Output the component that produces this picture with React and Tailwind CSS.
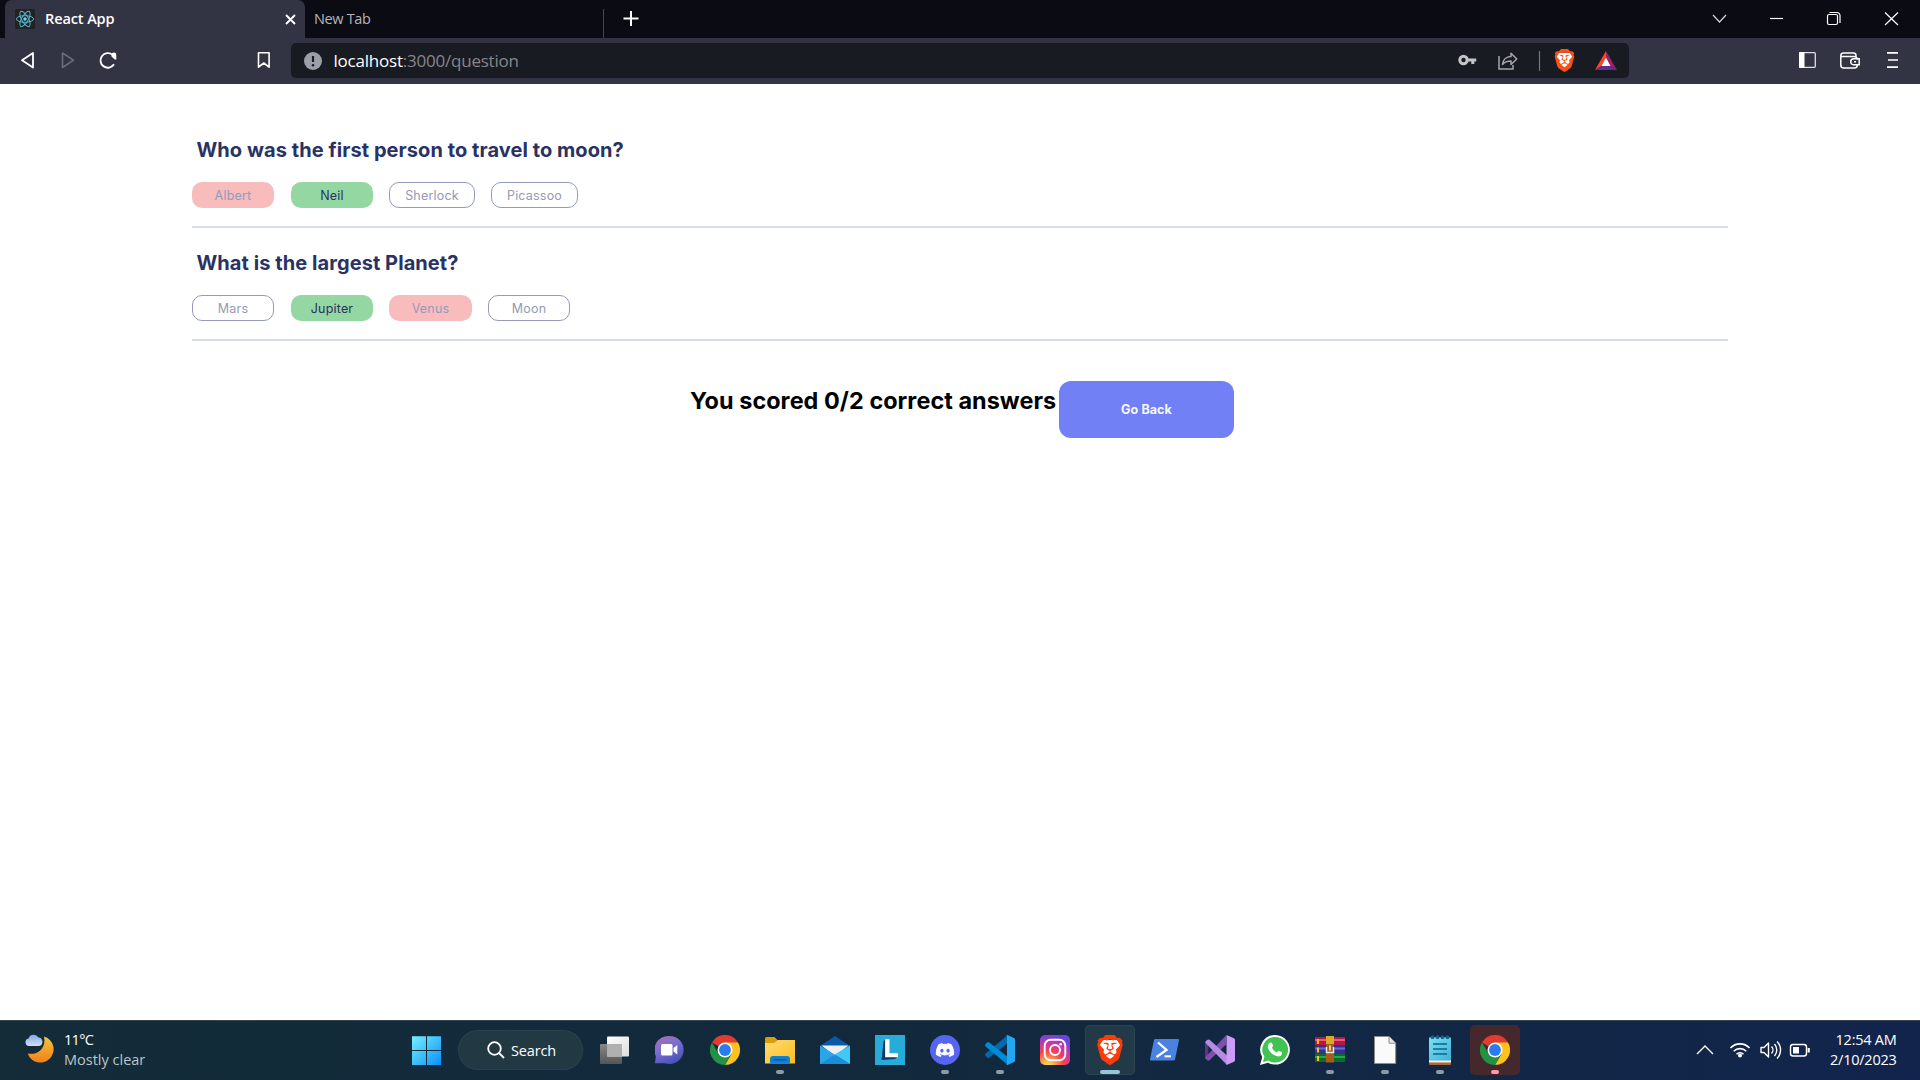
import React from "react";
import { SiBrave } from "react-icons/si";
import { FaDiscord } from "react-icons/fa";

const UI = "font-['Open_Sans','Noto_Sans',sans-serif]";

function ReactLogo() {
  return (
    <svg className="h-5 w-5" viewBox="0 0 20 20">
      <rect width="20" height="20" rx="1.5" fill="#222" />
      <g fill="none" stroke="#53b5cf" strokeWidth="1">
        <ellipse cx="10" cy="10" rx="8.6" ry="3.3" />
        <ellipse cx="10" cy="10" rx="8.6" ry="3.3" transform="rotate(60 10 10)" />
        <ellipse cx="10" cy="10" rx="8.6" ry="3.3" transform="rotate(120 10 10)" />
      </g>
      <circle cx="10" cy="10" r="1.7" fill="#61dafb" />
    </svg>
  );
}

function BraveLogo({ className, color }) {
  return (
    <span className={`relative block ${className}`}>
      <svg className="absolute inset-0 h-full w-full" viewBox="0 0 24 24">
        <path d="M6 4h12l2.500 4-2 9-6.500 5-6.500-5-2-9z" fill="#fff" />
      </svg>
      <SiBrave className="absolute inset-0 h-full w-full" color={color} />
    </span>
  );
}

function WindowControls() {
  return (
    <svg className="h-[38px] w-[220px]" viewBox="1700 0 220 38" fill="none" stroke="#fff" strokeWidth="1.200">
      <path d="M1713 15l6.500 7 6.500-7" stroke="#d4d4d6" />
      <path d="M1770 18.500h13" />
      <rect x="1827.500" y="14.500" width="10" height="10" rx="1.500" />
      <path d="M1829.500 12.500h7.500a3 3 0 0 1 3 3v7.500" />
      <path d="M1885 12.500l13 12.500M1898 12.500l-13 12.500" />
    </svg>
  );
}

function Header() {
  return (
    <header>
      <div className={`flex h-[38px] justify-between bg-[#0b0b14] pl-[5px] ${UI}`}>
        <div className="flex">
          <div className="flex h-[38px] w-[300px] items-center rounded-t-[7px] bg-[#323443] pl-[10px] pr-[9px]">
            <ReactLogo />
            <span className="ml-[10px] flex-1 whitespace-nowrap text-[14.5px] font-semibold tracking-[-0.1px] text-white">React App</span>
            <svg className="h-[11px] w-[11px]" viewBox="0 0 11 11" stroke="#fff" strokeWidth="1.900">
              <path d="M1 1l9 9M10 1l-9 9" />
            </svg>
          </div>
          <div className="flex w-[299px] items-center justify-between pl-[9px]">
            <span className="text-[14.5px] tracking-[-0.35px] text-[#b4b5ba]">New Tab</span>
            <span className="mt-[9px] h-[29px] w-px bg-[#45454b]" />
          </div>
          <svg className="ml-[19px] mt-[11px] h-[15px] w-[16px]" viewBox="0 0 16 15" stroke="#fff" strokeWidth="2">
            <path d="M8 0v15M.5 7.500h15" />
          </svg>
        </div>
        <WindowControls />
      </div>
      <div className={`flex h-[46px] items-start bg-[#323443] ${UI}`}>
        <svg className="h-[46px] w-[291px]" viewBox="0 38 291 46" fill="none" strokeLinejoin="round">
          <path d="M33 53v14.500L22 60.200z" stroke="#fff" strokeWidth="1.800" />
          <path d="M62.500 53v14.500l11-7.300z" stroke="#6b6d78" strokeWidth="1.600" />
          <path d="M112.500 54.800a7.300 7.300 0 1 0 1.500 9.500" stroke="#fff" strokeWidth="1.900" />
          <path d="M111.500 55a2.300 2.300 0 0 1 4.800 0v4.500h-1.500l-3.300-3z" fill="#fff" />
          <path d="M258.500 52.800h10.600v14.400l-5.300-4.200-5.300 4.200z" stroke="#fff" strokeWidth="1.600" />
        </svg>
        <div className="mt-[5px] flex h-[35px] w-[1338px] items-center rounded-[5px] bg-[#191b22] pl-[13px]">
          <svg className="h-[18px] w-[18px]" viewBox="0 0 18 18">
            <circle cx="9" cy="9" r="9" fill="#9d9fa8" />
            <path d="M9 4v6" stroke="#191b22" strokeWidth="2.200" />
            <circle cx="9" cy="13.200" r="1.300" fill="#191b22" />
          </svg>
          <span className="ml-[11.500px] flex-1 whitespace-nowrap text-[17px] tracking-[-0.22px] text-[#85868c]">
            <span className="text-white">localhost</span>:3000/question
          </span>
          <svg className="h-[35px] w-[145px]" viewBox="1401 43 145 35" fill="none">
            <circle cx="1463.500" cy="60" r="3.700" stroke="#c4c5c9" strokeWidth="3" />
            <path d="M1467.500 60h8.700M1472.800 60v4" stroke="#c4c5c9" strokeWidth="3" />
            <path d="M1499 56v13h14v-4" stroke="#a5a6a9" strokeWidth="1.500" />
            <path d="M1502.500 64.500c.5-4.500 3.500-8 8.500-8v-3.300l5.800 5.800-5.800 5.500v-3.500c-3.500 0-6.500 1-8.500 3.500z" stroke="#a5a6a9" strokeWidth="1.500" strokeLinejoin="round" />
            <path d="M1539.500 51v20" stroke="#74757a" strokeWidth="1.200" />
          </svg>
          <BraveLogo className="ml-[7px] h-[23px] w-[23px]" color="#fb4f14" />
          <svg className="ml-[19px] mr-[12px] h-[19px] w-[22px]" viewBox="0 0 22 19">
            <path d="M11 0L0 19l7-4.500 4-8z" fill="#ff4724" />
            <path d="M11 0l11 19-7-4.500-4-8z" fill="#9e1f63" />
            <path d="M0 19h22l-7-4.500H7z" fill="#662d91" />
            <path d="M11 6.500L15.500 15h-9z" fill="#fff" />
          </svg>
        </div>
        <svg className="h-[46px] w-[291px]" viewBox="1629 38 291 46" fill="none" stroke="#fff">
          <rect x="1799.700" y="52.700" width="15.600" height="14.600" rx="1" stroke="#e0e0e4" strokeWidth="1.300" />
          <path d="M1799.500 52.500h4.500v15h-4.500z" fill="#fff" />
          <path d="M1856 57v-1.500a2.500 2.500 0 0 0-2.500-2.500h-10a2.700 2.700 0 0 0-2.700 2.700v9.300a3 3 0 0 0 3 3h10.500a3 3 0 0 0 3-3M1841 56.500h13a3.300 3.300 0 0 1 3.300 3" strokeWidth="1.500" />
          <path d="M1859.200 58.800h-5.500a3 3 0 0 0 0 6h5.500zM1854 61.800h2" strokeWidth="1.500" />
          <path d="M1887 52.800h11M1888 60h10M1887 67.200h11" strokeWidth="1.700" />
        </svg>
      </div>
    </header>
  );
}

const PILL = "flex h-[26px] items-center justify-center rounded-[10px] text-[12.5px] tracking-[0.2px] leading-[18px] pt-px";
const STYLES = {
  wrong: "bg-[#f8bcbc] text-[#939bbd]",
  right: "bg-[#94d7a2] text-[#293264]",
  plain: "border border-[#949bbd] text-[#949ab2]",
};

function Question({ title, options }) {
  return (
    <section className="h-[113px] border-b-2 border-[#d9dcf0] pt-[22px]">
      <h2 className="pl-[4.5px] text-[20px] leading-[26px] font-[650] tracking-[0.07px] text-[#293264]">{title}</h2>
      <div className="mt-[19px] flex">
        {options.map(([label, kind, size]) => (
          <button key={label} className={`${PILL} ${STYLES[kind]} ${size}`}>
            {label}
          </button>
        ))}
      </div>
    </section>
  );
}

function Windows() {
  return (
    <svg className="h-[30px] w-[30px]" viewBox="0 0 30 30">
      <defs>
        <linearGradient id="win" x1="0" y1="0" x2="1" y2="1">
          <stop offset="0" stopColor="#74f0ff" />
          <stop offset="1" stopColor="#0a8ffb" />
        </linearGradient>
      </defs>
      <path d="M0 1.300h14v13.700H0zM15 1.300h14v13.700H15zM0 16h14v14H0zM15 16h14v14H15z" fill="url(#win)" />
    </svg>
  );
}

function Chrome() {
  return (
    <svg className="h-[30px] w-[30px]" viewBox="0 0 48 48">
      <path d="M24 24L3.200 12A24 24 0 0 1 44.800 12z" fill="#e33b2e" />
      <path d="M24 12h20.800A24 24 0 0 1 24 48l10.400-18z" fill="#fcc31e" />
      <path d="M13.600 30L3.200 12A24 24 0 0 0 24 48l10.400-18z" fill="#229342" />
      <circle cx="24" cy="24" r="12" fill="#fff" />
      <circle cx="24" cy="24" r="9.500" fill="#2a7af0" />
    </svg>
  );
}

const icon = "h-[30px] w-[30px]";

const apps = [
  {
    id: "task-view",
    art: (
      <svg className={icon} viewBox="0 0 30 30">
        <defs>
          <linearGradient id="tvA" x1="0" y1="0" x2="0" y2="1"><stop offset="0" stopColor="#888" /><stop offset="1" stopColor="#555" /></linearGradient>
          <linearGradient id="tvB" x1="0" y1="0" x2="1" y2="1"><stop offset="0" stopColor="#fff" /><stop offset="1" stopColor="#ddd" /></linearGradient>
        </defs>
        <rect x="0" y="9" width="22" height="20" rx="1" fill="url(#tvA)" />
        <rect x="7" y="1.500" width="22" height="20" rx="1" fill="url(#tvB)" />
        <path d="M7 9h15v12.500H7z" fill="#b0b0b0" />
      </svg>
    ),
  },
  {
    id: "chat",
    art: (
      <svg className={icon} viewBox="0 0 30 30">
        <defs><linearGradient id="chat" x1="0" y1="0" x2=".5" y2="1"><stop offset="0" stopColor="#b070ad" /><stop offset=".5" stopColor="#7a6fd0" /><stop offset="1" stopColor="#4b53bc" /></linearGradient></defs>
        <path d="M14 1a14 14 0 1 1-4 27.200H0l.8-7A14 14 0 0 1 14 1z" fill="url(#chat)" />
        <rect x="6" y="9" width="11.500" height="11.500" rx="1.500" fill="#fff" />
        <path d="M18.500 13l3.800-3v9.500l-3.800-3z" fill="#fff" />
      </svg>
    ),
  },
  { id: "chrome", art: <Chrome /> },
  {
    id: "files",
    dot: true,
    art: (
      <svg className={icon} viewBox="0 0 30 30">
        <defs><linearGradient id="fold" x1="0" y1="0" x2="1" y2="1"><stop offset="0" stopColor="#ffdc70" /><stop offset="1" stopColor="#fcbd22" /></linearGradient></defs>
        <path d="M0 3.500A1.500 1.500 0 0 1 1.500 2h8l3.500 3.500V12H0z" fill="#dc9c07" />
        <path d="M0 8h9l4-3h17v23.500H0z" fill="url(#fold)" />
        <path d="M5 28.500V24a3 3 0 0 1 3-3h14a3 3 0 0 1 3 3v4.500z" fill="#1180d0" />
        <path d="M8.500 24.800h13" stroke="#0b4f91" strokeWidth="1.200" />
      </svg>
    ),
  },
  {
    id: "mail",
    art: (
      <svg className={icon} viewBox="0 0 30 30">
        <path d="M0 11L15 1l15 10v5H0z" fill="#0b5aa8" />
        <path d="M1.500 10.500h27L15 21z" fill="#f0f0f2" />
        <path d="M0 10.500L30 29H0z" fill="#29a5e8" />
        <path d="M30 10.500V29L14.500 19.500z" fill="#41c9f5" />
        <path d="M0 29l15-9.200L30 29z" fill="#1b8ddb" />
      </svg>
    ),
  },
  {
    id: "l-app",
    art: (
      <span className="flex h-[30px] w-[30px] items-center justify-center bg-[#27abd8]">
        <svg className={icon} viewBox="0 0 30 30">
          <path d="M10 4.500v17L6.500 25l2-18.500zM10 21.500h13L20 24 6.500 25z" fill="#0c3a6b" />
          <path d="M10.200 4.200h4.300v14h8.400v4H10.200z" fill="#fff" />
        </svg>
      </span>
    ),
  },
  {
    id: "discord",
    dot: true,
    art: (
      <span className="flex h-[30px] w-[30px] items-center justify-center rounded-full bg-[#5865f2]">
        <FaDiscord className="h-[20px] w-[20px]" color="#fff" />
      </span>
    ),
  },
  {
    id: "code",
    dot: true,
    art: (
      <svg className={icon} viewBox="0 0 30 30">
        <path d="M.6 18.600L22.500.2V8.300L4 22.800q-.8.500-1.500 0L.5 21q-.9-1.200.1-2.400z" fill="#0069b0" />
        <path d="M.6 11.400q-1-1.200-.1-2.400l2-1.800q.7-.5 1.500 0L22.500 21.700v8.100z" fill="#008ad5" />
        <path d="M22.500 0l6.500 3q1 .5 1 1.600v20.800q0 1.100-1 1.600l-6.500 3q-1 .2-1.600-.5 1.100.6 1.100-1V1.500q0-1.600-1.100-1 .6-.7 1.600-.5z" fill="#24a7f2" />
      </svg>
    ),
  },
  {
    id: "instagram",
    art: (
      <svg className={icon} viewBox="0 0 30 30">
        <defs>
          <radialGradient id="ig" cx=".27" cy="1.050" r="1.050">
            <stop offset="0" stopColor="#ffdd55" /><stop offset=".15" stopColor="#fdc04b" /><stop offset=".5" stopColor="#f5414f" /><stop offset=".75" stopColor="#c837ab" /><stop offset="1" stopColor="#6a45d8" />
          </radialGradient>
        </defs>
        <rect width="30" height="30" rx="5" fill="url(#ig)" />
        <rect x="4.700" y="4.700" width="20.600" height="20.600" rx="6" fill="none" stroke="#fff" strokeWidth="1.900" />
        <circle cx="15" cy="15" r="5" fill="none" stroke="#fff" strokeWidth="1.900" />
        <circle cx="20.700" cy="9.200" r="1.300" fill="#fff" />
      </svg>
    ),
  },
  { id: "brave", active: true, art: <BraveLogo className="h-[30px] w-[30px]" color="#fb3c08" /> },
  {
    id: "powershell",
    art: (
      <svg className={icon} viewBox="0 0 30 30">
        <path d="M5.500 4H28q1.300 0 1 1.300L25 24.500q-.3 1-1.500 1H1Q-.3 25.500 0 24.300L4 5q.3-1 1.500-1z" fill="#4a82e0" />
        <path d="M8 7.500l8.500 7.500-10 7" fill="none" stroke="#fff" strokeWidth="2.300" />
        <path d="M14.500 21.300H21" stroke="#fff" strokeWidth="2" />
      </svg>
    ),
  },
  {
    id: "studio",
    art: (
      <svg className={icon} viewBox="0 0 30 30">
        <path d="M0 7.500q0-1 .8-1.400L3.300 4.700v20.600L.8 24Q0 23.500 0 22.500z" fill="#5d3486" />
        <path d="M1 21.500L21 .5V9.500L4.500 25.300q-.9.600-1.800.1L.8 24q-1-1 .2-2.500z" fill="#7f4faf" />
        <path d="M1 8.500q-1-1.500-.2-2.500l1.900-1.200q1-.6 1.900 0L22 20.500V30z" fill="#b58be0" />
        <path d="M21.500 0L29 3.300q1 .5 1 1.600v20.200q0 1.100-1 1.600L21.500 30z" fill="#cc9af7" />
      </svg>
    ),
  },
  {
    id: "whatsapp",
    art: (
      <svg className={icon} viewBox="0 0 30 30">
        <path d="M15.200 0A14.800 14.800 0 1 1 8 27.800L0 30l2.200-7.800A14.800 14.800 0 0 1 15.200 0z" fill="#fff" />
        <path d="M15.200 2A12.800 12.800 0 1 1 8.400 25.600L2.900 27.200l1.500-5.400A12.800 12.800 0 0 1 15.200 2z" fill="#40c351" />
        <path d="M10.300 7.500c.8-.3 1.500 0 1.800.8l1 2.400c.2.600-.9 1.600-1.100 2.100.9 2.200 2.600 3.700 5 4.700.6-.3 1.400-1.900 2-1.700l2.800 1.400c.8.500-.1 2.800-1 3.500-1.800 1.200-4.100.7-6.700-.6-2.700-1.400-5.300-4.300-6.100-7-.7-2.400.5-4.600 2.300-5.600z" fill="#fff" />
      </svg>
    ),
  },
  {
    id: "archive",
    dot: true,
    art: (
      <svg className={icon} viewBox="0 0 30 30">
        <rect y="2" width="30" height="8.500" fill="#b31942" /><rect y="4" width="30" height="2" fill="#e9577b" />
        <rect y="10.500" width="30" height="8.500" fill="#35328f" /><rect y="12.500" width="30" height="2" fill="#6b69dd" />
        <rect y="19" width="30" height="8" fill="#0b6a30" /><rect y="21" width="30" height="2" fill="#22a64f" />
        <path d="M2 4h2v5H2zM2 12.500h2v5H2zM2 21h2v5H2z" fill="#ffc400" />
        <rect x="11" y="1" width="8" height="26.500" fill="#a85a17" /><rect x="11" y="1" width="8" height="8" fill="#d9a928" />
        <path d="M11.500 12v5.500h7V12" fill="none" stroke="#e8e8e8" strokeWidth="1.500" />
        <path d="M15 10.500v5" stroke="#eee" strokeWidth="1.500" />
      </svg>
    ),
  },
  {
    id: "document",
    dot: true,
    art: (
      <svg className={icon} viewBox="0 0 30 30">
        <path d="M4.500 1.500H19l6.700 6.700v20.300H4.500z" fill="#fafafa" stroke="#8b8b8b" />
        <path d="M19 1.500v6.700h6.700" fill="#e8e8e8" stroke="#8b8b8b" />
      </svg>
    ),
  },
  {
    id: "notes",
    dot: true,
    art: (
      <svg className={icon} viewBox="0 0 30 30">
        <defs><linearGradient id="nt" x1="0" y1="0" x2="1" y2="1"><stop offset="0" stopColor="#7be0f5" /><stop offset="1" stopColor="#3fb0d6" /></linearGradient></defs>
        <rect x="4" y="26" width="22" height="4" rx="1" fill="#b5642a" />
        <rect x="4" y="25" width="22" height="2.500" fill="#eee" />
        <rect x="4" y="2" width="22" height="23.500" rx="1.500" fill="url(#nt)" />
        <path d="M8 9h14M8 14h14M8 19h14" stroke="#0b6686" strokeWidth="1.700" />
        <g fill="#13627e"><circle cx="7.500" cy="2.200" r="1.900" /><circle cx="12.500" cy="2.200" r="1.900" /><circle cx="17.500" cy="2.200" r="1.900" /><circle cx="22.500" cy="2.200" r="1.900" /></g>
      </svg>
    ),
  },
  { id: "chrome-alert", alert: true, art: <Chrome /> },
];

function AppTile({ app }) {
  const tile = app.alert
    ? "bg-[#44282b]"
    : app.active
      ? "bg-[#223a48] inset-ring inset-ring-[#2c4452]"
      : "";
  return (
    <div className="flex w-[55px] justify-center">
      <div className={`relative flex h-[50px] w-[50px] items-center justify-center rounded-[5px] ${tile}`}>
        {app.art}
        {app.dot && <span className="absolute bottom-[1px] h-[4px] w-[8px] rounded-full bg-[#8f9aa3]" />}
        {app.alert && <span className="absolute bottom-[1px] h-[4px] w-[8px] rounded-full bg-[#ff99a4]" />}
        {app.active && <span className="absolute bottom-[1px] h-[4px] w-[20px] rounded-full bg-[#96c6d6]" />}
      </div>
    </div>
  );
}

function Taskbar() {
  return (
    <footer className={`flex h-[60px] items-center inset-shadow-[0_1px_0_#34474f] bg-linear-to-r from-[#132c38] via-[#12293d] to-[#12244d] text-[14.5px] leading-[20px] text-white ${UI}`}>
      <div className="flex w-[412px] items-center pl-[25px]">
        <svg className="mb-[4px] h-[29px] w-[29px]" viewBox="0 0 29 29">
          <defs>
            <linearGradient id="moon" x1="0" y1="0" x2="0" y2="1"><stop offset="0" stopColor="#f7c53a" /><stop offset="1" stopColor="#f07f1b" /></linearGradient>
            <linearGradient id="cloud" x1="0" y1="0" x2="0" y2="1"><stop offset="0" stopColor="#82a6e8" /><stop offset="1" stopColor="#d3e0fa" /></linearGradient>
          </defs>
          <path d="M19 2.500a13.300 13.300 0 1 1-16.300 17C13 21.500 21.500 14 19 2.500z" fill="url(#moon)" />
          <path d="M4 12a3.800 3.800 0 0 1-.5-7.500A5.500 5.500 0 0 1 13.500 3.500 4.300 4.300 0 0 1 14 12z" fill="url(#cloud)" />
        </svg>
        <div className="ml-[10px] whitespace-nowrap">
          <div className="tracking-[-0.7px]">11°C</div>
          <div className="text-[#bcc5ca]">Mostly clear</div>
        </div>
      </div>
      <Windows />
      <div className="ml-[16px] flex h-[40px] w-[125px] items-center rounded-full bg-[#223944] pl-[29px] inset-ring inset-ring-[#2a414c]">
        <svg className="h-[18px] w-[18px]" viewBox="0 0 18 18" fill="none" stroke="#fff" strokeWidth="1.800">
          <circle cx="7.500" cy="7.500" r="6.300" /><path d="M12 12l5 5" />
        </svg>
        <span className="ml-[6px] pt-px tracking-[-0.15px]">Search</span>
      </div>
      <div className="ml-[4px] flex">
        {apps.map((a) => <AppTile key={a.id} app={a} />)}
      </div>
      <svg className="ml-auto h-[24px] w-[120px]" viewBox="1694 1038 120 24" fill="none" stroke="#fff" strokeWidth="1.400">
        <path d="M1697 1054l8-8 8 8" />
        <path d="M1730.500 1048a13 13 0 0 1 19 0M1733.700 1051.300a8.800 8.800 0 0 1 12.600 0M1736.500 1054.300a5 5 0 0 1 7 0" strokeWidth="1.600" />
        <circle cx="1740" cy="1055.500" r="2" fill="#fff" stroke="none" />
        <path d="M1761 1047.500h3l4.500-4.500v14l-4.500-4.500h-3z" strokeLinejoin="round" />
        <path d="M1771.500 1046.500a5 5 0 0 1 0 7M1774.500 1044a9 9 0 0 1 0 12M1777 1041.500a12 12 0 0 1 0 17" />
        <rect x="1790.500" y="1044.500" width="16" height="11.500" rx="2.500" />
        <rect x="1793" y="1047" width="6" height="6.500" fill="#fff" stroke="none" />
        <path d="M1808.700 1048v4.500" strokeWidth="2.200" />
      </svg>
      <div className="mr-[23.5px] ml-[0.5px] w-[82px] whitespace-nowrap text-right tracking-[-0.25px]">
        <div>12:54 AM</div>
        <div>2/10/2023</div>
      </div>
    </footer>
  );
}

export default function App() {
  return (
    <div className="flex h-[1080px] w-[1920px] flex-col overflow-hidden bg-white font-['Inter',sans-serif]">
      <Header />
      <main className="flex-1 px-[192px] pt-[31px]">
        <Question
          title="Who was the first person to travel to moon?"
          options={[
            ["Albert", "wrong", "w-[82px]"],
            ["Neil", "right", "ml-[17px] w-[82px]"],
            ["Sherlock", "plain", "ml-[16px] w-[86px]"],
            ["Picassoo", "plain", "ml-[16px] w-[87px]"],
          ]}
        />
        <Question
          title="What is the largest Planet?"
          options={[
            ["Mars", "plain", "w-[82px]"],
            ["Jupiter", "right", "ml-[17px] w-[82px]"],
            ["Venus", "wrong", "ml-[16px] w-[83px]"],
            ["Moon", "plain", "ml-[16px] w-[82px]"],
          ]}
        />
        <div className="mt-[40px] flex pl-[498px]">
          <h1 className="mt-[5px] w-[369px] whitespace-nowrap text-[23.4px] leading-[30px] font-[650] tracking-[0.06px] text-black">
            You scored 0/2 correct answers
          </h1>
          <button className="h-[57px] w-[175px] rounded-[12px] bg-[#7280f5] pt-px text-[12.5px] font-[650] tracking-[0.1px] text-[#f5f7fb]">
            Go Back
          </button>
        </div>
      </main>
      <Taskbar />
    </div>
  );
}
